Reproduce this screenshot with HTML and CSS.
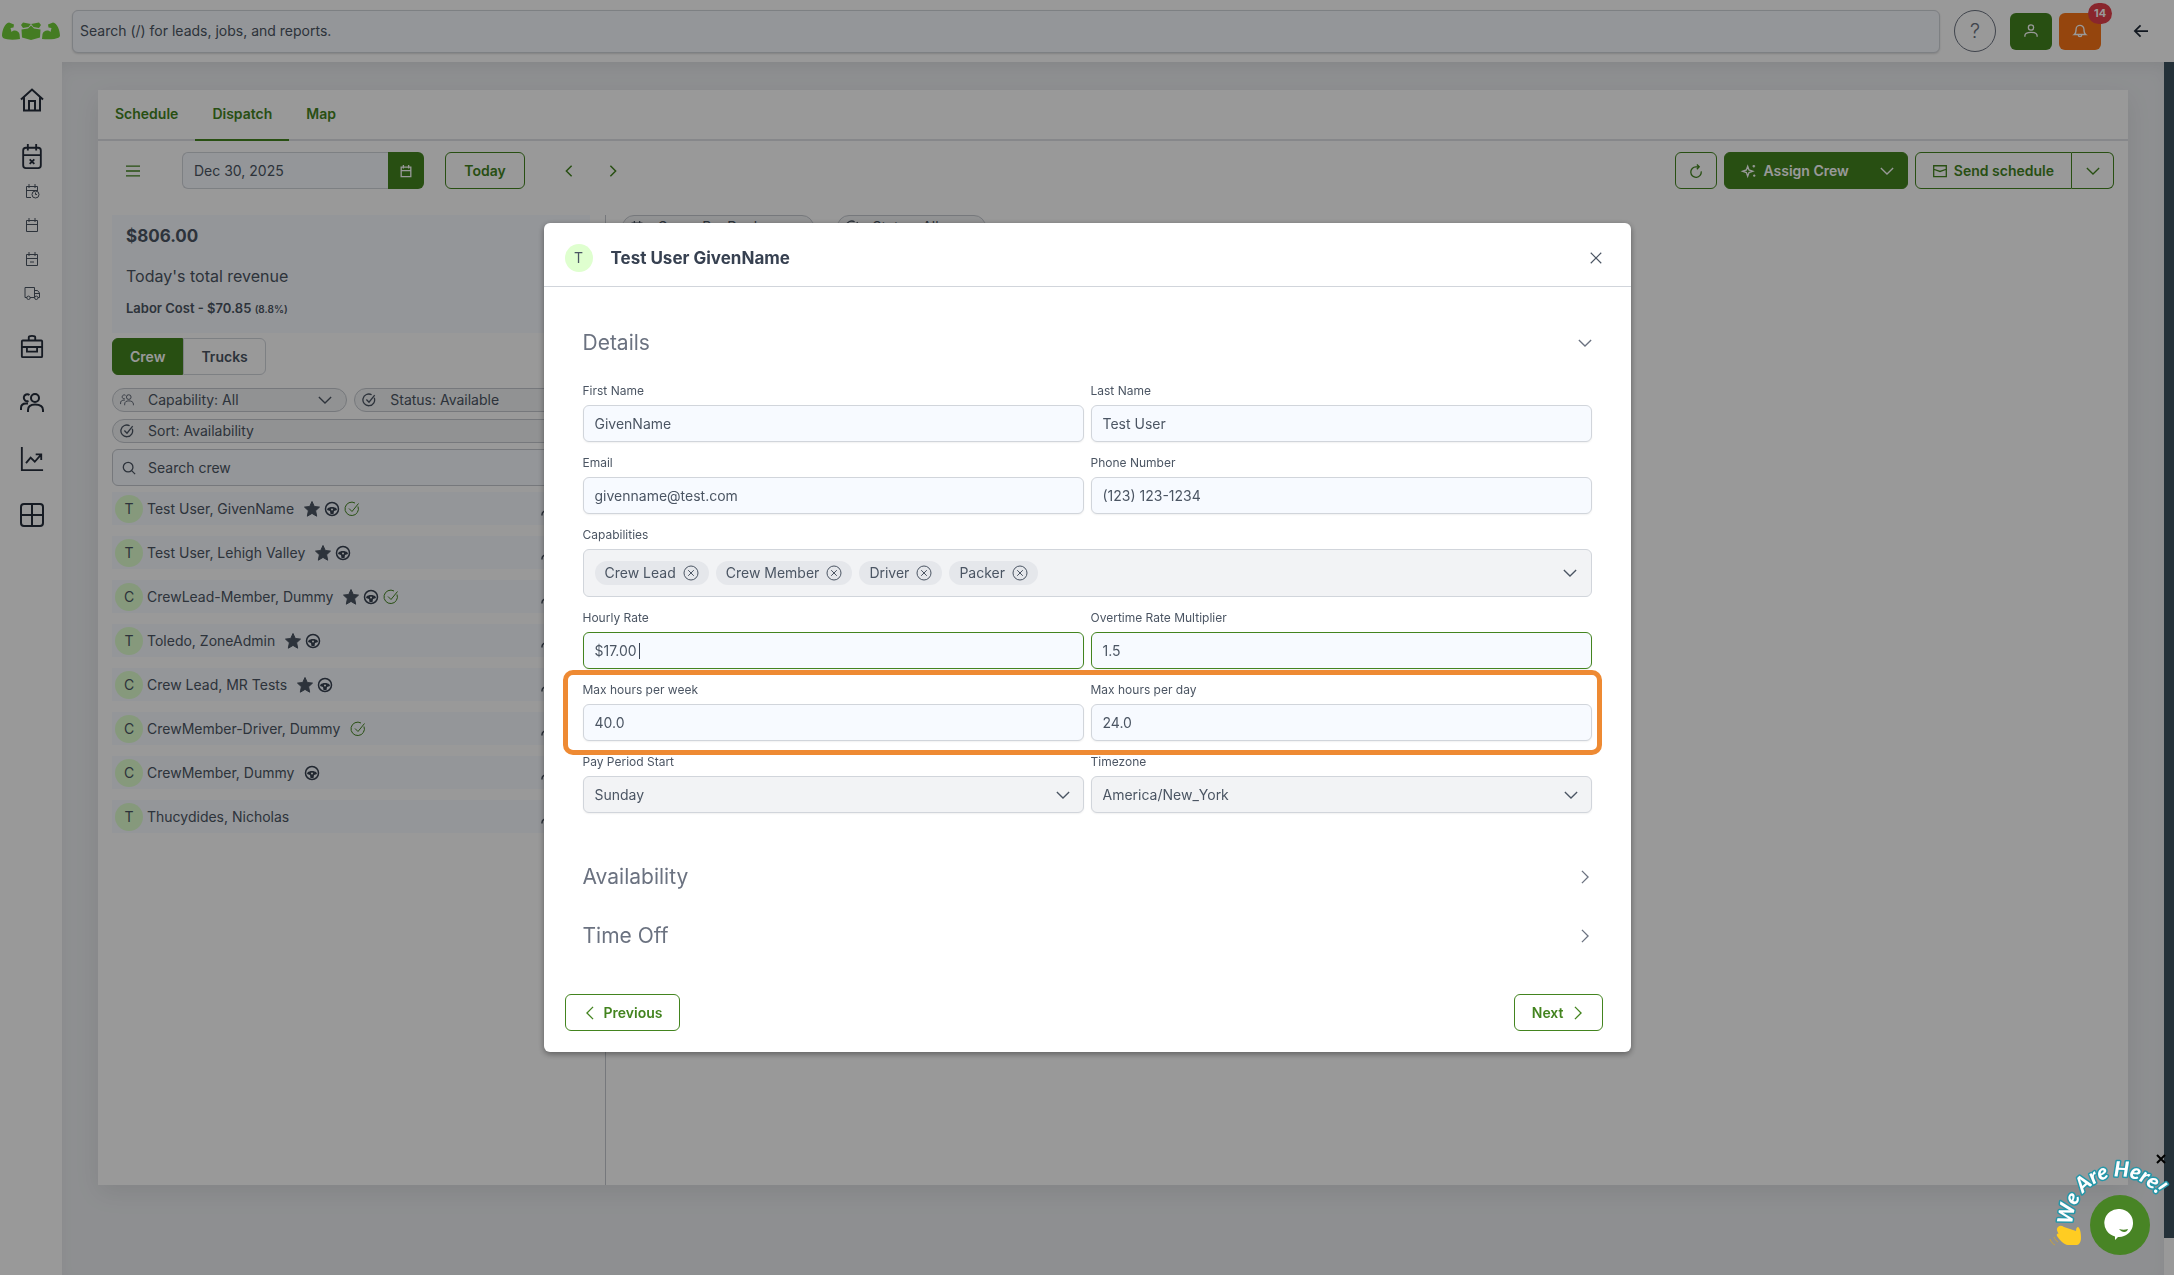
FILE: index.html
```html
<!DOCTYPE html>
<html lang="en">
<head>
  <meta charset="utf-8">
  <title>Dispatch</title>
  <link rel="stylesheet" href="styles.css">
</head>
<body>
  <!-- Shared icons -->
  <svg class="sprite" aria-hidden="true">
    <symbol id="chevron-down" viewBox="0 0 16 16"><path d="M1 4.500l7 7 7-7"/></symbol>
    <symbol id="chevron-right" viewBox="0 0 16 16"><path d="M4.500 1l7 7-7 7"/></symbol>
    <symbol id="chevron-left" viewBox="0 0 16 16"><path d="M11.500 1l-7 7 7 7"/></symbol>
    <symbol id="close" viewBox="0 0 16 16"><path d="M1 1l14 14M15 1L1 15"/></symbol>
    <symbol id="calendar" viewBox="0 0 16 16"><path d="M2.500 3.500h11v11h-11zM2.500 7.500h11M5 1v4M11 1v4"/></symbol>
    <symbol id="users" viewBox="0 0 24 24"><circle cx="15" cy="7" r="4"/><path d="M8 21v-2c0-4 3-5.500 7-5.500s8 1.500 8 5.500v2M8.500 10a3.500 3.500 0 1 1 1-6M1 19v-2c0-3 2-4.500 5-4.500h2"/></symbol>
    <symbol id="user" viewBox="0 0 16 16"><circle cx="8" cy="4" r="3"/><path d="M1 14.500v-1c0-3 3-4 7-4s7 1 7 4v1"/></symbol>
    <symbol id="check" viewBox="0 0 16 16"><path d="M14 5.500A6.700 6.700 0 1 1 11 2M5 7.500l3 3 6.500-8"/></symbol>
    <symbol id="search" viewBox="0 0 16 16"><circle cx="7" cy="7" r="5.500"/><path d="M11 11l4 4"/></symbol>
    <symbol id="star" viewBox="0 0 16 16"><path d="M8 .5l2.300 5 5.200.6-3.900 3.600 1.100 5.500L8 12.400l-4.700 2.800 1.100-5.500L.5 6.100l5.200-.6z"/></symbol>
    <symbol id="wheel" viewBox="0 0 16 16"><circle cx="8" cy="8" r="6.500"/><path class="spokes" d="M3.500 7.500C5.500 5.500 10.500 5.500 12.500 7.500L13 9l-3 1-.5 3h-3L6 10 3 9z"/><circle class="hub" cx="8" cy="8.500" r="1"/></symbol>
    <symbol id="remove" viewBox="0 0 16 16"><circle cx="8" cy="8" r="7"/><path d="M5.200 5.200l5.600 5.600M10.800 5.200l-5.600 5.600"/></symbol>
  </svg>

  <div class="app">
    <header class="topbar">
      <a href="#" class="logo" aria-label="Home">
        <svg viewBox="0 0 58 18">
          <path d="M0 14C0 8 3 1 7 .5l5 2-.5 3-3 .5 1 4c3-3 7-1 8 2l.5 5C12 18 5 18 1 16zM58 14c0-6-3-13-7-13.500l-5 2 .5 3 3 .5-1 4c-3-3-7-1-8 2l-.5 5c6 .5 13 .5 17-1.500z"/>
          <path d="M19 3l2-2.500 8 1.500 8-1.500L39 3l-2 3-5.500-1L29 1.800 26.500 5 21 6zM19.500 7.500L26 6.500l3-3 3 3 6.500 1-.5 8-9 2.500-9-2.500z"/>
        </svg>
      </a>
      <input type="search" class="global-search" aria-label="Global search" placeholder="Search (/) for leads, jobs, and reports.">
      <button class="help-button" aria-label="Help">?</button>
      <button class="square-button" aria-label="Account"><svg class="icon"><use href="#user"/></svg></button>
      <button class="square-button orange" aria-label="Notifications">
        <svg class="icon" viewBox="0 0 16 16"><path d="M1.500 12h13c-1.500-1-2-2.500-2-6a4.500 4.500 0 0 0-9 0c0 3.500-.5 5-2 6zM6 12.500a2 2 0 0 0 4 0"/></svg>
        <span class="badge">14</span>
      </button>
      <button class="back-button" aria-label="Back"><svg class="icon" viewBox="0 0 16 16"><path d="M16 8H1.500M7.500 1.500L1 8l6.500 6.500"/></svg></button>
    </header>

    <div class="body-row">
      <nav class="sidebar">
        <a href="#" aria-label="Home"><svg viewBox="0 0 24 24"><path d="M1 11.500L12 1.500l11 10M4 9.500V22.500h16V9.500M9 22.500V13h6v9.500"/></svg></a>
        <a href="#" aria-label="Calendar"><svg viewBox="0 0 24 28"><rect x="2.500" y="4" width="19" height="22" rx="3"/><path d="M2.500 12h19M7.500 0v7M16.500 0v7M9.500 16.500l5 5M14.500 16.500l-5 5"/></svg></a>
        <a href="#" class="sub" aria-label="Hours"><svg viewBox="0 0 16 16"><path d="M7 14.500H2.500v-11h11V8M2.500 7.500h11M5 1v4M11 1v4"/><circle cx="11.500" cy="11.500" r="3.500"/><path d="M11.500 9.500v2h1.500"/></svg></a>
        <a href="#" class="sub" aria-label="Day"><svg><use href="#calendar"/></svg></a>
        <a href="#" class="sub" aria-label="Events"><svg viewBox="0 0 16 16"><path d="M2.500 3.500h11v11h-11zM2.500 7.500h11M5 1v4M11 1v4M6 11h4"/></svg></a>
        <a href="#" class="sub" aria-label="Trucks"><svg viewBox="0 0 16 16"><path d="M3 12.500H1v-10h9.500v10H6M10.500 5.500h3L15.500 8v4.500H14M10.500 8.500h5"/><circle cx="4.500" cy="12.800" r="1.700"/><circle cx="12.300" cy="12.800" r="1.700"/></svg></a>
        <a href="#" aria-label="Jobs"><svg viewBox="0 0 24 26"><rect x="1" y="6" width="22" height="18" rx="1"/><path d="M1 13h22M8.500 6V2.500C8.500 1 10 1 12 1s3.500 0 3.500 1.500V6M6.500 13v5h11v-5"/></svg></a>
        <a href="#" aria-label="Customers"><svg><use href="#users"/></svg></a>
        <a href="#" aria-label="Reports"><svg viewBox="0 0 24 26"><path d="M1 0v25h23M5.500 17.500l5-6 4.500 4.500L22 8M16 8h6v6"/></svg></a>
        <a href="#" aria-label="Tables"><svg viewBox="0 0 24 24"><rect x="1" y="1" width="22" height="22" rx="3"/><path d="M12 1v22M1 12h22"/></svg></a>
      </nav>

      <main class="content">
        <section class="panel">
          <nav class="tabs">
            <a href="#">Schedule</a>
            <a href="#" class="active">Dispatch</a>
            <a href="#">Map</a>
          </nav>

          <div class="toolbar">
            <button class="icon-button menu" aria-label="Menu"><svg class="icon" viewBox="0 0 16 16"><path d="M0 2.500h16M0 8h16M0 13.500h16"/></svg></button>
            <div class="date-group">
              <input type="text" aria-label="Date" value="Dec 30, 2025">
              <button aria-label="Pick a date"><svg class="icon"><use href="#calendar"/></svg></button>
            </div>
            <button class="button today">Today</button>
            <div class="arrows">
              <button class="icon-button" aria-label="Previous day"><svg class="icon small"><use href="#chevron-left"/></svg></button>
              <button class="icon-button" aria-label="Next day"><svg class="icon small"><use href="#chevron-right"/></svg></button>
            </div>
            <div class="toolbar-actions">
              <button class="button refresh" aria-label="Refresh"><svg class="icon" viewBox="0 0 16 16"><path d="M14 8.500A6 6 0 1 1 8 3.200h3.500M9 .5l2.700 2.700L9 6"/></svg></button>
              <button class="button filled">
                <svg class="icon" viewBox="0 0 16 16"><path d="M6.500 2.500L8 6.800l4.300 1.500L8 9.800l-1.500 4.300L5 9.800.7 8.300 5 6.800zM13.500 1v3M12 2.500h3M14 12v2.500M12.700 13.300h2.600"/></svg>
                Assign Crew
                <svg class="icon arrow"><use href="#chevron-down"/></svg>
              </button>
              <div class="split">
                <button class="button">
                  <svg class="icon" viewBox="0 0 16 16"><path d="M.8 2h14.400v12.500H.8zM.8 6L8 8.500 15.200 6"/></svg>
                  Send schedule
                </button>
                <button class="button toggle" aria-label="More send options"><svg class="icon"><use href="#chevron-down"/></svg></button>
              </div>
            </div>
          </div>

          <div class="columns">
            <aside class="crew-column">
              <div class="summary">
                <strong class="amount">$806.00</strong>
                <p class="revenue">Today's total revenue</p>
                <p class="labor">Labor Cost - $70.85 <small>(8.8%)</small></p>
              </div>

              <div class="crew-toggle">
                <button class="selected">Crew</button>
                <button>Trucks</button>
              </div>

              <div class="filters">
                <label class="pill">
                  <svg class="icon"><use href="#users"/></svg>
                  <select aria-label="Capability"><option>Capability: All</option></select>
                  <svg class="icon"><use href="#chevron-down"/></svg>
                </label>
                <label class="pill">
                  <svg class="icon"><use href="#check"/></svg>
                  <select aria-label="Status"><option>Status: Available</option></select>
                  <svg class="icon"><use href="#chevron-down"/></svg>
                </label>
                <label class="pill wide">
                  <svg class="icon"><use href="#check"/></svg>
                  <select aria-label="Sort"><option>Sort: Availability</option></select>
                  <svg class="icon"><use href="#chevron-down"/></svg>
                </label>
              </div>

              <label class="crew-search">
                <svg class="icon"><use href="#search"/></svg>
                <input type="search" aria-label="Search crew" placeholder="Search crew">
              </label>

              <ul class="crew-list">
                <li><span class="avatar">T</span><span>Test User, GivenName</span><span class="marks"><svg class="star"><use href="#star"/></svg><svg class="wheel"><use href="#wheel"/></svg><svg class="ok"><use href="#check"/></svg></span><svg class="person"><use href="#user"/></svg></li>
                <li><span class="avatar">T</span><span>Test User, Lehigh Valley</span><span class="marks"><svg class="star"><use href="#star"/></svg><svg class="wheel"><use href="#wheel"/></svg></span><svg class="person"><use href="#user"/></svg></li>
                <li><span class="avatar">C</span><span>CrewLead-Member, Dummy</span><span class="marks"><svg class="star"><use href="#star"/></svg><svg class="wheel"><use href="#wheel"/></svg><svg class="ok"><use href="#check"/></svg></span><svg class="person"><use href="#user"/></svg></li>
                <li><span class="avatar">T</span><span>Toledo, ZoneAdmin</span><span class="marks"><svg class="star"><use href="#star"/></svg><svg class="wheel"><use href="#wheel"/></svg></span><svg class="person"><use href="#user"/></svg></li>
                <li><span class="avatar">C</span><span>Crew Lead, MR Tests</span><span class="marks"><svg class="star"><use href="#star"/></svg><svg class="wheel"><use href="#wheel"/></svg></span><svg class="person"><use href="#user"/></svg></li>
                <li><span class="avatar">C</span><span>CrewMember-Driver, Dummy</span><span class="marks"><svg class="ok"><use href="#check"/></svg></span><svg class="person"><use href="#user"/></svg></li>
                <li><span class="avatar">C</span><span>CrewMember, Dummy</span><span class="marks"><svg class="wheel"><use href="#wheel"/></svg></span><svg class="person"><use href="#user"/></svg></li>
                <li><span class="avatar">T</span><span>Thucydides, Nicholas</span><svg class="person"><use href="#user"/></svg></li>
              </ul>
            </aside>

            <div class="jobs-column">
              <label class="pill group">
                <svg class="icon"><use href="#calendar"/></svg>
                <select aria-label="Group by"><option>Group By: Dock</option></select>
              </label>
              <label class="pill status">
                <svg class="icon"><use href="#check"/></svg>
                <select aria-label="Job status"><option>Status: All</option></select>
              </label>
            </div>
          </div>
        </section>
      </main>
      <div class="edge"></div>
    </div>
  </div>

  <div class="overlay">
    <div class="modal" role="dialog" aria-labelledby="modalTitle">
      <div class="modal-header">
        <span class="avatar">T</span>
        <h2 id="modalTitle">Test User GivenName</h2>
        <button class="close-button" aria-label="Close"><svg class="icon small"><use href="#close"/></svg></button>
      </div>

      <div class="modal-body">
        <button class="section-title">Details <svg class="icon"><use href="#chevron-down"/></svg></button>

        <form class="fields">
          <div class="field-row">
            <div class="field">
              <label for="firstName">First Name</label>
              <input type="text" id="firstName" value="GivenName">
            </div>
            <div class="field">
              <label for="lastName">Last Name</label>
              <input type="text" id="lastName" value="Test User">
            </div>
          </div>
          <div class="field-row">
            <div class="field">
              <label for="email">Email</label>
              <input type="email" id="email" value="givenname@test.com">
            </div>
            <div class="field">
              <label for="phone">Phone Number</label>
              <input type="tel" id="phone" value="(123) 123-1234">
            </div>
          </div>
          <div class="field">
            <span class="field-label" id="capabilitiesLabel">Capabilities</span>
            <div class="tag-box" role="group" aria-labelledby="capabilitiesLabel">
              <span class="tag">Crew Lead <button type="button" aria-label="Remove Crew Lead"><svg class="icon"><use href="#remove"/></svg></button></span>
              <span class="tag">Crew Member <button type="button" aria-label="Remove Crew Member"><svg class="icon"><use href="#remove"/></svg></button></span>
              <span class="tag">Driver <button type="button" aria-label="Remove Driver"><svg class="icon"><use href="#remove"/></svg></button></span>
              <span class="tag">Packer <button type="button" aria-label="Remove Packer"><svg class="icon"><use href="#remove"/></svg></button></span>
              <button type="button" class="tag-toggle" aria-label="Show capabilities"><svg class="icon"><use href="#chevron-down"/></svg></button>
            </div>
          </div>
          <div class="field-row">
            <div class="field">
              <label for="hourlyRate">Hourly Rate</label>
              <input type="text" id="hourlyRate" class="edited editing" value="$17.00">
            </div>
            <div class="field">
              <label for="overtimeRate">Overtime Rate Multiplier</label>
              <input type="text" id="overtimeRate" class="edited" value="1.5">
            </div>
          </div>
          <div class="field-row highlight">
            <div class="field">
              <label for="maxWeek">Max hours per week</label>
              <input type="text" id="maxWeek" value="40.0">
            </div>
            <div class="field">
              <label for="maxDay">Max hours per day</label>
              <input type="text" id="maxDay" value="24.0">
            </div>
          </div>
          <div class="field-row">
            <div class="field">
              <label for="payStart">Pay Period Start</label>
              <div class="select-box">
                <select id="payStart"><option>Sunday</option></select>
                <svg class="icon"><use href="#chevron-down"/></svg>
              </div>
            </div>
            <div class="field">
              <label for="timezone">Timezone</label>
              <div class="select-box">
                <select id="timezone"><option>America/New_York</option></select>
                <svg class="icon"><use href="#chevron-down"/></svg>
              </div>
            </div>
          </div>
        </form>

        <button class="section-title">Availability <svg class="icon"><use href="#chevron-right"/></svg></button>
        <button class="section-title">Time Off <svg class="icon"><use href="#chevron-right"/></svg></button>
      </div>

      <div class="modal-footer">
        <button class="button"><svg class="icon"><use href="#chevron-left"/></svg> Previous</button>
        <button class="button">Next <svg class="icon"><use href="#chevron-right"/></svg></button>
      </div>
    </div>
  </div>

  <!-- Chat widget -->
  <div class="chat">
    <svg class="chat-banner" viewBox="0 0 130 100" aria-hidden="true">
      <path id="arc" d="M30 82A47 47 0 1 1 120 86" fill="none"/>
      <text><textPath href="#arc" startOffset="10">We Are Here!</textPath></text>
      <g class="hand">
        <path d="M14 74c2-2 4-1 6 0l12 4c0-3 1-4 2-4 2 1 3 6 3 11 0 4-2 7-4 7H24c-4 0-9-6-11-9-1-2 1-3 2-2-2-3-3-5-1-7z"/>
        <path class="motion" d="M6 86c1 3 3 5 5 6M10 84c1 2 2 4 4 5"/>
      </g>
    </svg>
    <button class="chat-button" aria-label="Open chat">
      <svg viewBox="0 0 32 34"><path class="bubble" d="M16 1a14 14 0 1 1-2 28l-3 3v-3.500A14 14 0 0 1 16 1z"/><path class="smile" d="M15 21c3 1 6 1 9 0-1 4-6 4-9 0z"/></svg>
    </button>
    <button class="chat-close" aria-label="Hide chat"><svg viewBox="0 0 10 10"><path d="M1 1l8 8M9 1L1 9"/></svg></button>
  </div>
</body>
</html>
```
FILE: styles.css
```css
* {
  box-sizing: border-box;
}

body {
  margin: 0;
  font-family: Inter, "Open Sans", sans-serif;
  font-size: 14px;
  line-height: 20px;
  color: #4b5563;
}

button, input, select {
  font: inherit;
  color: inherit;
}

button {
  padding: 0;
  border: none;
  background: none;
  cursor: pointer;
}

a {
  color: inherit;
  text-decoration: none;
}

svg {
  fill: none;
  stroke: currentColor;
}

.sprite {
  display: none;
}

.icon {
  width: 14px;
  height: 14px;
  flex: none;
  overflow: visible;
  stroke-width: 1.5;
}

.icon.small {
  width: 12px;
  height: 12px;
}

/* Page frame */
.app {
  display: flex;
  flex-direction: column;
  min-height: 100vh;
  background: #fff;
}

.topbar {
  display: flex;
  align-items: center;
  height: 62px;
  padding-right: 26px;
}

.logo {
  width: 72px;
  padding-left: 2px;
}

.logo svg {
  display: block;
  width: 58px;
  height: 18px;
  fill: #72cf3a;
  stroke: none;
}

.global-search {
  flex: 1;
  height: 43px;
  margin-right: 14px;
  padding: 0 7px 2px;
  border: 1px solid #d1d5db;
  border-radius: 6px;
  background: #f7faff;
  box-shadow: 0 1px 2px rgba(0, 0, 0, 0.15);
}

input::placeholder {
  color: #4b5563;
  opacity: 1;
}

.help-button {
  width: 42px;
  height: 42px;
  margin-right: 14px;
  border: 1px solid #6b7280;
  border-radius: 50%;
  color: #6b7280;
  font-size: 20px;
  font-weight: 300;
}

.square-button {
  position: relative;
  display: flex;
  align-items: center;
  justify-content: center;
  width: 42px;
  height: 37px;
  margin-right: 7px;
  border-radius: 6px;
  background: #43841f;
  color: #fff;
}

.square-button.orange {
  background: #f97316;
}

.badge {
  position: absolute;
  top: -10px;
  right: -11px;
  min-width: 24px;
  border-radius: 12px;
  background: #e5404b;
  font-size: 11px;
  font-weight: 700;
  line-height: 21px;
}

.back-button {
  margin-left: 26px;
  color: #1f2937;
}

.back-button .icon {
  display: block;
  stroke-width: 2;
}

.body-row {
  display: flex;
  flex: 1;
}

.sidebar {
  display: flex;
  flex-direction: column;
  align-items: center;
  width: 62px;
  padding: 26px 0 0 2px;
  color: #252d3b;
}

.sidebar a {
  display: flex;
  height: 24px;
  margin-bottom: 32px;
}

.sidebar svg {
  width: 24px;
  height: 24px;
  stroke-width: 2;
}

.sidebar a:nth-child(2) {
  height: 26px;
  margin-bottom: 13px;
}

.sidebar a:nth-child(2) svg {
  height: 26px;
}

.sidebar .sub {
  height: 16px;
  margin-bottom: 18px;
  color: #4b5563;
}

.sidebar .sub svg {
  width: 16px;
  height: 16px;
  stroke-width: 1;
}

.sidebar .sub:nth-child(6) {
  margin-bottom: 34px;
}

.content {
  display: flex;
  flex: 1;
  padding: 28px 36px 90px;
  background: #edeff2;
  box-shadow: inset 0 8px 20px -8px rgba(0, 0, 0, 0.1);
}

.edge {
  width: 10px;
  margin-bottom: 37px;
  background: #3c525f;
}

.panel {
  display: flex;
  flex: 1;
  flex-direction: column;
  background: #fff;
  box-shadow: 0 8px 24px rgba(0, 0, 0, 0.08);
}

/* Tabs and toolbar */
.tabs {
  display: flex;
  height: 51px;
  border-bottom: 2px solid #e0e2e6;
  color: #43841f;
  font-weight: 600;
}

.tabs a {
  height: 51px;
  padding: 14px 17px;
  border-bottom: 2px solid transparent;
}

.tabs .active {
  border-color: #43841f;
}

.toolbar {
  display: flex;
  align-items: center;
  padding: 11px 14px 0;
  color: #43841f;
}

.button {
  display: flex;
  align-items: center;
  justify-content: center;
  gap: 7px;
  height: 37px;
  padding: 0 17px;
  border: 1px solid #43841f;
  border-radius: 6px;
  color: #43841f;
  font-weight: 600;
}

.button.today {
  width: 80px;
}

.button.filled {
  background: #43841f;
  color: #fff;
}

.button .arrow {
  margin-left: 24px;
}

.button.refresh {
  width: 42px;
  padding: 0;
}

.button.filled .arrow {
  margin-right: -4px;
}

.icon-button {
  display: flex;
  align-items: center;
  justify-content: center;
  width: 42px;
  height: 37px;
}

.arrows .icon {
  stroke-width: 2;
}

.icon-button.menu {
  margin-right: 28px;
}

.date-group {
  display: flex;
  width: 242px;
  height: 37px;
  margin-right: 21px;
}

.date-group input {
  flex: 1;
  min-width: 0;
  padding: 0 11px;
  border: 1px solid #d1d5db;
  border-right: none;
  border-radius: 6px 0 0 6px;
  background: #f7faff;
  color: #4b5563;
}

.date-group button {
  display: flex;
  align-items: center;
  justify-content: center;
  width: 36px;
  border-radius: 0 6px 6px 0;
  background: #43841f;
  color: #fff;
}

.arrows {
  display: flex;
  gap: 2px;
  margin-left: 23px;
}

.toolbar-actions {
  display: flex;
  gap: 7px;
  margin-left: auto;
}

.split {
  display: flex;
}

.split .button:first-child {
  border-radius: 6px 0 0 6px;
}

.split .toggle {
  width: 42px;
  padding: 0;
  border-left: none;
  border-radius: 0 6px 6px 0;
}

/* Crew column */
.columns {
  display: flex;
  flex: 1;
  margin-top: 26px;
}

.crew-column {
  width: 25%;
  padding: 0 15px 0 14px;
  border-right: 1px solid #c5c9cf;
}

.summary {
  padding: 9px 14px 14px;
  background: #f7faff;
}

.summary p {
  margin: 0;
}

.amount {
  display: block;
  font-size: 17px;
  line-height: 24px;
}

.summary .revenue {
  margin: 16px 0 10px;
  font-size: 16px;
  line-height: 24px;
}

.labor {
  font-size: 13px;
  font-weight: 600;
}

.labor small {
  font-size: 10px;
}

.crew-toggle {
  display: flex;
  margin: 5px 0 13px;
  font-weight: 600;
}

.crew-toggle button {
  height: 37px;
  padding: 0 17px;
  border: 1px solid #d1d5db;
  border-radius: 0 6px 6px 0;
}

.crew-toggle .selected {
  border-color: #43841f;
  border-radius: 6px 0 0 6px;
  background: #43841f;
  color: #fff;
}

.filters {
  display: grid;
  grid-template-columns: 1fr 1fr;
  gap: 7px;
  margin-bottom: 6px;
}

.pill {
  display: flex;
  align-items: center;
  gap: 14px;
  height: 24px;
  padding: 0 14px 0 7px;
  border: 1px solid #c5c9cf;
  border-radius: 12px;
  background: #f2f3f5;
}

.pill.wide {
  grid-column: span 2;
}

.pill select {
  flex: 1;
  min-width: 0;
  padding: 0;
  border: none;
  background: none;
  appearance: none;
}

.crew-search {
  display: flex;
  align-items: center;
  gap: 12px;
  height: 37px;
  padding: 0 9px;
  border: 1px solid #c5c9cf;
  border-radius: 6px;
  background: #f7faff;
}

.crew-search input {
  flex: 1;
  padding: 0;
  border: none;
  background: none;
}

.crew-list {
  display: flex;
  flex-direction: column;
  gap: 11px;
  margin: 6px 0 0;
  padding: 0;
  list-style: none;
}

.crew-list li {
  display: flex;
  align-items: center;
  height: 33px;
  padding: 0 33px 0 3px;
  background: #f7faff;
}

.avatar {
  width: 28px;
  height: 28px;
  margin-right: 4px;
  border-radius: 50%;
  background: #dfffcf;
  line-height: 28px;
  text-align: center;
}

.marks {
  display: flex;
  align-items: center;
  gap: 4px;
  margin-left: 10px;
}

.marks svg {
  width: 16px;
  height: 16px;
}

.marks .star {
  fill: #4b5563;
}

.marks .wheel {
  color: #374151;
  stroke-width: 1.5;
}

.spokes {
  fill: currentColor;
  stroke: none;
}

.hub {
  fill: #fff;
  stroke: none;
}

.marks .ok {
  color: #43841f;
}

.person {
  width: 16px;
  height: 16px;
  margin-left: auto;
  stroke-width: 1.5;
}

.jobs-column {
  display: flex;
  flex: 1;
  align-items: flex-start;
  gap: 23px;
  padding: 0 16px;
}

.jobs-column .group {
  width: 192px;
}

.jobs-column .status {
  width: 149px;
}

/* Modal */
.overlay {
  position: fixed;
  inset: 0;
  display: flex;
  align-items: center;
  justify-content: center;
  background: rgba(0, 0, 0, 0.4);
}

.modal {
  width: 50vw;
  border-radius: 6px;
  background: #fff;
  box-shadow: 0 2px 6px rgba(0, 0, 0, 0.4);
}

.modal-header {
  display: flex;
  align-items: center;
  height: 64px;
  padding: 6px 28px 0 21px;
  border-bottom: 1px solid #d1d5db;
}

.modal-header h2 {
  margin: 0 auto 0 14px;
  color: #374151;
  font-size: 17px;
  font-weight: 700;
}

.close-button {
  display: flex;
  margin-right: 1px;
}

.modal-body {
  padding: 26px 39px 0;
}

.section-title {
  display: flex;
  align-items: center;
  justify-content: space-between;
  width: 100%;
  height: 59px;
  color: #6b7280;
  font-size: 21px;
}

.fields {
  display: flex;
  flex-direction: column;
  gap: 11px;
  padding: 9px 0 34px;
}

.field-row {
  position: relative;
  display: grid;
  grid-template-columns: 1fr 1fr;
  gap: 7px;
}

.field label, .field-label {
  display: block;
  margin-bottom: 4px;
  font-size: 12px;
}

.field input, .field select {
  display: block;
  width: 100%;
  height: 37px;
  padding: 0 11px;
  border: 1px solid #d1d5db;
  border-radius: 6px;
  background: #f7faff;
  box-shadow: 0 1px 2px rgba(0, 0, 0, 0.06);
}

.field .edited {
  border-color: #43841f;
}

/* Text cursor after the value */
.field .editing {
  background: linear-gradient(#374151, #374151) 55px 50% / 1px 16px no-repeat #f7faff;
}

.field select {
  background: #f2f3f5;
  appearance: none;
}

.select-box {
  display: grid;
  align-items: center;
}

.select-box select, .select-box .icon {
  grid-area: 1 / 1;
}

.select-box .icon {
  justify-self: end;
  margin-right: 14px;
  pointer-events: none;
}

.tag-box {
  display: flex;
  align-items: center;
  gap: 7px;
  height: 48px;
  padding: 0 14px 0 11px;
  border: 1px solid #d1d5db;
  border-radius: 6px;
  background: #f2f3f5;
}

.tag {
  display: flex;
  align-items: center;
  gap: 7px;
  height: 24px;
  padding: 0 10px;
  border-radius: 12px;
  background: #e5e7eb;
}

.tag button, .tag-toggle {
  display: flex;
}

.tag .icon {
  width: 16px;
  height: 16px;
  stroke-width: 1;
}

.tag-toggle {
  margin-left: auto;
}

.highlight::after {
  content: "";
  position: absolute;
  inset: -10px -10px -14px -20px;
  border: 5px solid #ee8a33;
  border-radius: 10px;
  pointer-events: none;
}

.modal-footer {
  display: flex;
  justify-content: space-between;
  padding: 29px 28px 21px 21px;
}

/* Chat widget */
.chat {
  position: fixed;
  right: 0;
  bottom: 20px;
  width: 130px;
  height: 102px;
}

.chat-banner {
  position: absolute;
  inset: 0;
  width: 130px;
  height: 100px;
  overflow: visible;
}

.chat-banner #arc {
  stroke: none;
}

.chat-banner text {
  font-family: Lato, sans-serif;
  font-size: 21px;
  font-style: italic;
  font-weight: 900;
  fill: #fff;
  stroke: #2596a8;
  stroke-width: 3;
  stroke-linejoin: round;
  paint-order: stroke;
}

.hand {
  fill: #ffcc22;
  stroke: none;
}

.hand .motion {
  fill: none;
  stroke: #c9a23a;
}

.chat-button {
  position: absolute;
  right: 24px;
  bottom: 0;
  display: flex;
  align-items: center;
  justify-content: center;
  width: 60px;
  height: 60px;
  border-radius: 50%;
  background: #488425;
}

.chat-button svg {
  width: 32px;
  height: 34px;
  stroke: none;
}

.chat-button .bubble {
  fill: #fff;
}

.chat-button .smile {
  fill: #488425;
}

.chat-close {
  position: absolute;
  top: 1px;
  right: 8px;
  color: #000;
}

.chat-close svg {
  display: block;
  width: 10px;
  height: 10px;
  stroke-width: 2;
}
```
